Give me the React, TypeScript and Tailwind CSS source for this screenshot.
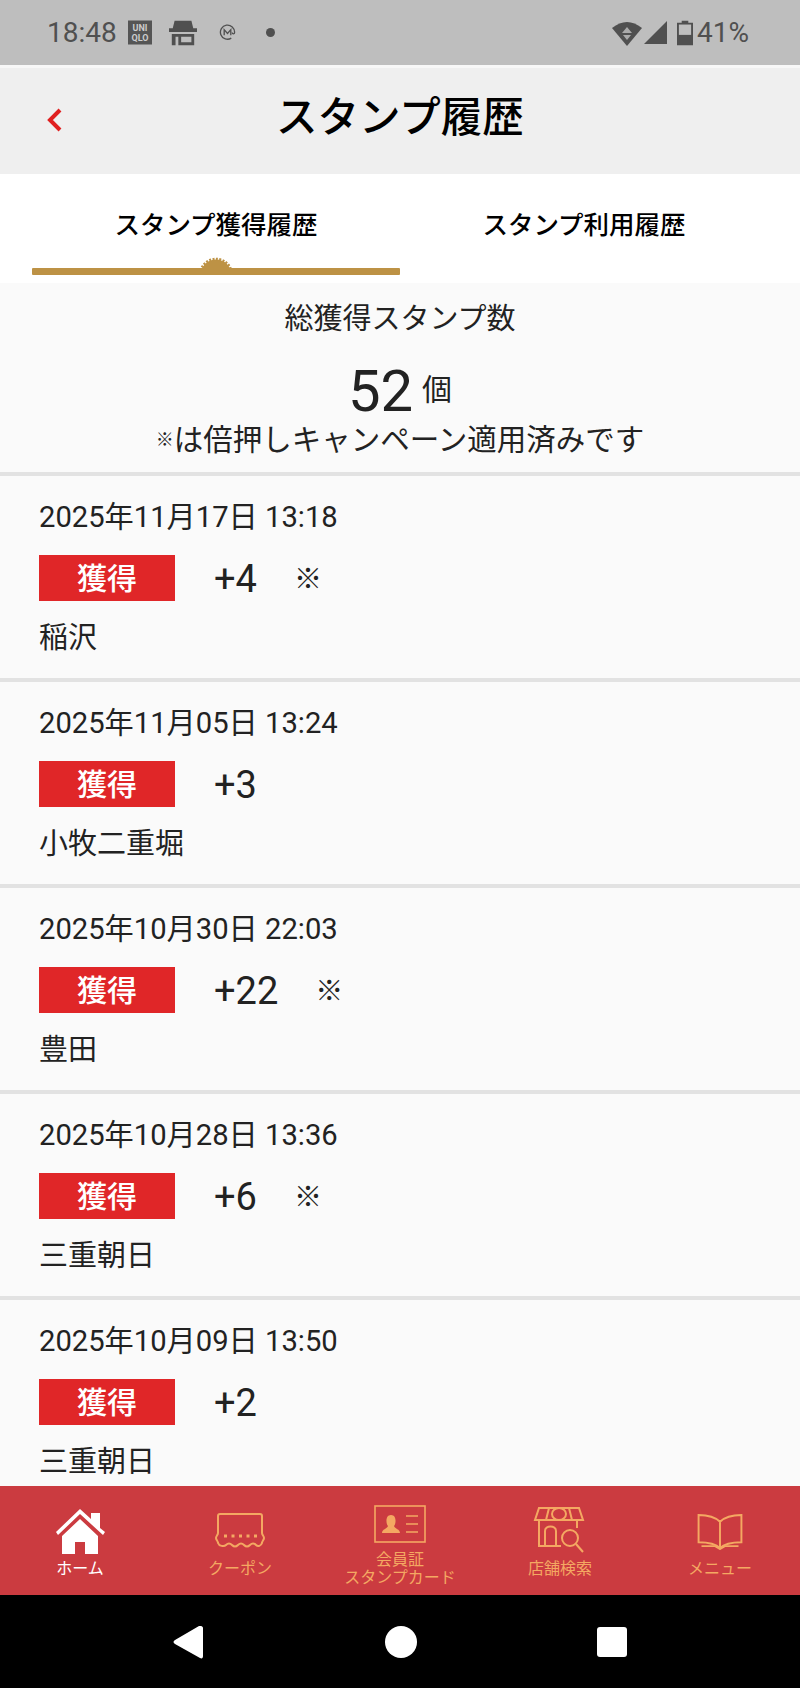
const font = "font-['Roboto','Noto_Sans_CJK_JP',sans-serif]";

const rows = [
  { date: "2025年11月17日 13:18", pts: "+4", mark: true, shop: "稲沢" },
  { date: "2025年11月05日 13:24", pts: "+3", mark: false, shop: "小牧二重堀" },
  { date: "2025年10月30日 22:03", pts: "+22", mark: true, shop: "豊田" },
  { date: "2025年10月28日 13:36", pts: "+6", mark: true, shop: "三重朝日" },
  { date: "2025年10月09日 13:50", pts: "+2", mark: false, shop: "三重朝日" },
];

const StatusBar = () => (
  <div className="flex h-[65px] items-center justify-between bg-[#bebebe] pl-[47px] pr-[51px] text-[#505050]">
    <div className="flex items-center">
      <span className="text-[28px] leading-none">18:48</span>
      {/* uniqlo tile */}
      <svg viewBox="0 0 24 24" className="ml-[11px] h-[25px] w-[24px]">
        <rect width="24" height="24" fill="#555" />
        <text x="12" y="10.5" textAnchor="middle" fontSize="9" fontWeight="700" fill="#ccc" fontFamily="Roboto">UNI</text>
        <text x="12" y="20.5" textAnchor="middle" fontSize="9" fontWeight="700" fill="#ccc" fontFamily="Roboto">QLO</text>
      </svg>
      {/* shop */}
      <svg viewBox="0 0 30 26" className="ml-[17px] h-[26px] w-[28px]" fill="#505050">
        <path d="M6 0h18l2 8h4v4H0V8h4z" />
        <path d="M3 14h24v12H3zM7 17v9h3v-9zM13 17v6h11v-6z" fillRule="evenodd" />
      </svg>
      <svg viewBox="0 0 18 18" className="ml-[22px] h-[17px] w-[17px]" fill="none" stroke="#505050" strokeWidth="1.4">
        <path d="M13 15A7.5 7.5 0 1 1 16.5 9c0 2-2.5 2-2.5 0" />
        <path d="M5.5 12V6l3.5 4 3.5-4v6" />
      </svg>
      <span className="ml-[30px] h-[9px] w-[9px] rounded-full bg-[#505050]" />
    </div>
    <div className="flex items-center">
      <svg viewBox="0 0 30 26" className="h-[26px] w-[30px]">
        <path d="M0 8Q15-4 30 8L15 26z" fill="#505050" />
        <path d="M15 7l5 6H10zM11 15h8l-4 5z" fill="#aaa" />
      </svg>
      <svg viewBox="0 0 24 24" className="ml-[2px] h-[25px] w-[23px]" fill="#505050">
        <path d="M24 0v24H0z" />
      </svg>
      <svg viewBox="0 0 17 26" className="ml-[10px] h-[26px] w-[16px]">
        <path d="M5 0h7v2h5v24H0V2h5z" fill="#505050" />
        <rect x="2" y="4" width="13" height="11" fill="#bebebe" />
      </svg>
      <span className="ml-[4px] text-[28px] leading-none">41%</span>
    </div>
  </div>
);

const Header = () => (
  <div className="relative flex h-[109px] items-center justify-center border-t-[3px] border-[#f7f7f7] bg-[#efefef] pb-[6px]">
    <svg viewBox="0 0 16 24" className="absolute left-[46px] top-[40px] h-[24px] w-[16px]" fill="none" stroke="#e02020" strokeWidth="4">
      <path d="M14 2L4 12l10 10" />
    </svg>
    <h1 className="text-[41.5px] font-medium leading-none text-black">スタンプ履歴</h1>
  </div>
);

const Tabs = () => (
  <div className="flex h-[109px] bg-white px-[32px]">
    <div className="relative flex w-[368px] justify-center pt-[32px]">
      <span className="text-[25.5px] font-medium leading-[38px] text-black">スタンプ獲得履歴</span>
      {/* gold scalloped bump sits on the underline */}
      <svg viewBox="0 0 36 14" className="absolute bottom-[12px] left-[166px] h-[14px] w-[36px]" fill="#bd9245">
        <circle cx="18" cy="18" r="15.5" />
        <circle cx="18" cy="18" r="16" fill="none" stroke="#bd9245" strokeWidth="2.5" strokeDasharray="2 1.4" />
      </svg>
      <span className="absolute bottom-[8px] left-0 h-[7px] w-full rounded-[1px] bg-[#bd9245]" />
    </div>
    <div className="flex w-[368px] justify-center pt-[32px]">
      <span className="text-[25.5px] font-medium leading-[38px] text-black">スタンプ利用履歴</span>
    </div>
  </div>
);

const Summary = () => (
  <div className="flex h-[193px] flex-col items-center border-b-[4px] border-[#e2e2e2] pt-[14px] text-[#222]">
    <p className="text-[29px] leading-[44px]">総獲得スタンプ数</p>
    <p className="mt-[20px] flex h-[60px] items-center">
      <span className="text-[58px] leading-none">52</span>
      <span className="ml-[9px] -translate-y-[1px] text-[30px] leading-none">個</span>
    </p>
    <p className="mt-[1px] flex items-center text-[29.5px] leading-[36px]">
      <span className="text-[18px] font-black">※</span>は倍押しキャンペーン適用済みです
    </p>
  </div>
);

const Row = ({ date, pts, mark, shop }: { date: string; pts: string; mark: boolean; shop: string }) => (
  <div className="h-[206px] border-b-[4px] border-[#e2e2e2] pl-[39px] pt-[19px] text-[#222]">
    <p className="text-[29.2px] leading-[44px]">{date}</p>
    <div className="mt-[16px] flex h-[46px] items-center">
      <span className="flex h-[46px] w-[136px] items-center justify-center bg-[#e02628] text-[30px] font-medium text-white">獲得</span>
      <span className="ml-[39px] translate-y-[1px] text-[38px] leading-none">{pts}</span>
      {mark && <span className="ml-[37px] translate-y-[2px] text-[28px] font-black leading-none">※</span>}
    </div>
    <p className="mt-[15px] text-[29px] leading-[44px]">{shop}</p>
  </div>
);

const HomeIcon = () => (
  <svg viewBox="0 0 52 46" className="h-[46px] w-[52px]" fill="white">
    <path d="M2 24L26 1l11 10V5h9v15l5 4-2 3L26 6 4 27z" />
    <path d="M8 28L26 11l18 17v18H31V34h-10v12H8z" />
  </svg>
);

const CouponIcon = () => (
  <svg viewBox="0 0 52 37" className="mb-[4px] h-[37px] w-[52px]" fill="none" stroke="#f4a862" strokeWidth="2">
    <path d="M6 1h40a2 2 0 0 1 2 2v17c0 2 2 3 2 5s-2 3-2 5c-1 3-4 4-6 2-2-2-4-2-6 0-2 2-4 2-6 0-2-2-4-2-6 0-2 2-4 2-6 0-2-2-4-2-6 0-2 2-7 1-8-2 0-2-2-3-2-5s2-3 2-5V3a2 2 0 0 1 2-2z" />
    <path d="M10 23h3M17.5 23h3M25 23h3M32.5 23h3M40 23h3" strokeWidth="3" />
  </svg>
);

const CardIcon = () => (
  <svg viewBox="0 0 52 38" className="h-[38px] w-[52px]" fill="none" stroke="#f4a862" strokeWidth="1.6">
    <rect x="1" y="1" width="50" height="36" />
    <path d="M32 11h12M32 19h12M32 27h12" />
    <path d="M8 28c0-4 5-4 6-7-2-2-3-11 3-11s5 9 3 11c1 3 6 3 6 7z" fill="#f4a862" stroke="none" />
  </svg>
);

const ShopIcon = () => (
  <svg viewBox="0 0 54 46" className="mb-[1px] h-[46px] w-[54px]" fill="none" stroke="#f4a862" strokeWidth="2">
    <path d="M6 1h40l4 12H2z" />
    <path d="M16 1l-3 12M36 1l3 12" />
    <ellipse cx="26" cy="7" rx="7" ry="6" />
    <path d="M6 13v26h22M44 13v8" />
    <path d="M12 39V24c0-6 11-6 11 0v15" />
    <circle cx="37" cy="31" r="8" />
    <path d="M43 37l7 8" />
  </svg>
);

const BookIcon = () => (
  <svg viewBox="0 0 48 38" className="mb-[4px] h-[37px] w-[48px]" fill="none" stroke="#f4a862" strokeWidth="2">
    <path d="M24 9C19 4 10 2 2 2v28c8 0 17 1 22 6 5-5 14-6 22-6V2c-8 0-17 2-22 7zM24 9v27" />
    <path d="M5 34h14l5 3 5-3h14" />
  </svg>
);

const NavItem = ({ icon, label, active, low }: { icon: React.ReactNode; label: React.ReactNode; active?: boolean; low?: boolean }) => (
  <div className={`flex w-[160px] flex-col items-center ${low ? "pt-[19px]" : "pt-[18px]"}`}>
    <div className={low ? "flex h-[38px] items-start" : "flex h-[50px] items-end justify-center"}>{icon}</div>
    <div className={`${low ? "mt-[8px] leading-[18px]" : "mt-[5px] leading-[20px]"} whitespace-nowrap text-center text-[16px] ${active ? "text-white" : "text-[#f4a862]"}`}>
      {label}
    </div>
  </div>
);

const BottomNav = () => (
  <div className="flex h-[109px] justify-center bg-[#cb3b40]">
    <NavItem icon={<HomeIcon />} label="ホーム" active />
    <NavItem icon={<CouponIcon />} label="クーポン" />
    <NavItem icon={<CardIcon />} label={<>会員証<br />スタンプカード</>} low />
    <NavItem icon={<ShopIcon />} label="店舗検索" />
    <NavItem icon={<BookIcon />} label="メニュー" />
  </div>
);

const SystemBar = () => (
  <div className="flex h-[93px] items-center bg-black pl-[173px]">
    <svg viewBox="0 0 30 34" className="h-[34px] w-[30px]" fill="white">
      <path d="M28 1c1 0 2 1 2 2v28c0 2-1 3-3 2L2 19c-2-1-2-3 0-4L26 1z" />
    </svg>
    <span className="ml-[182px] h-[32px] w-[32px] rounded-full bg-white" />
    <span className="ml-[180px] h-[30px] w-[30px] rounded-[3px] bg-white" />
  </div>
);

export default function App() {
  return (
    <div className={`flex h-[1688px] w-[800px] flex-col overflow-hidden bg-[#fafafa] ${font}`}>
      <StatusBar />
      <Header />
      <Tabs />
      <div className="min-h-0 flex-1 overflow-hidden">
        <Summary />
        {rows.map((r) => (
          <Row key={r.date} {...r} />
        ))}
      </div>
      <BottomNav />
      <SystemBar />
    </div>
  );
}
